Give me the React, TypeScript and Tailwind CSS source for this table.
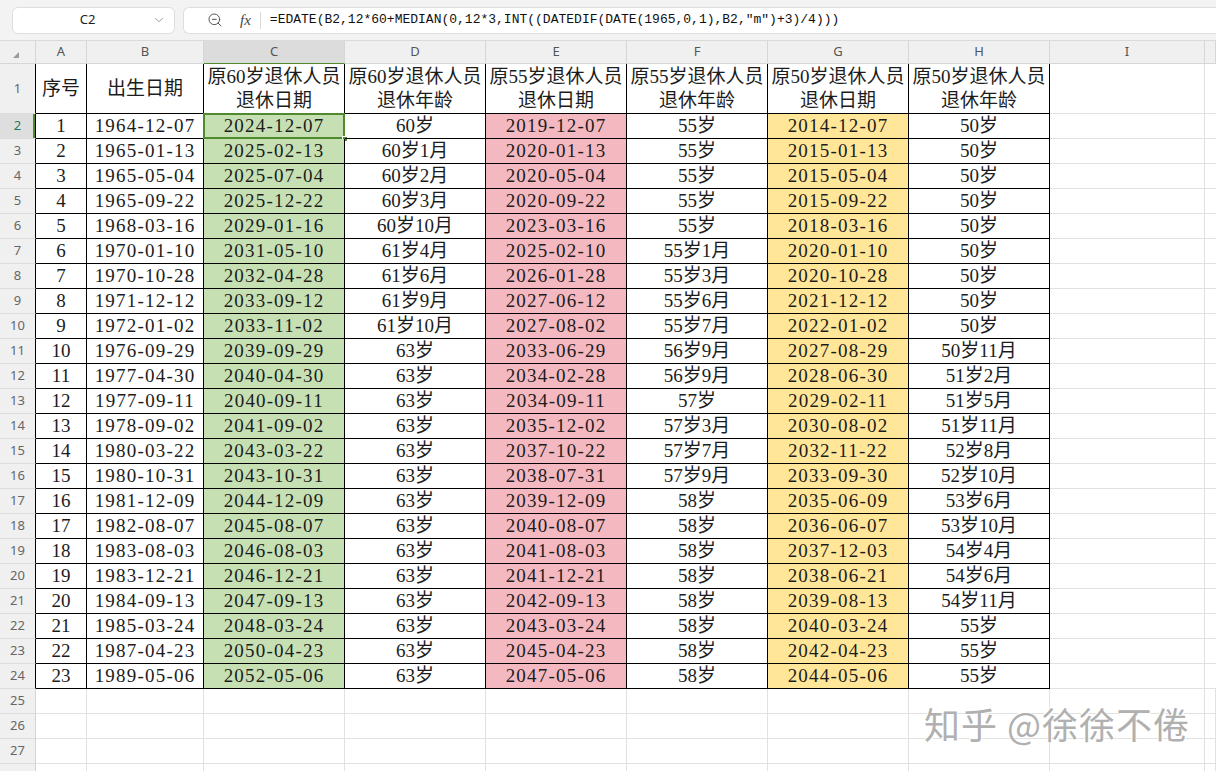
import React from "react";
import { ChevronDown, ZoomOut } from "lucide-react";

const rows: string[][] = [
  ["1", "1964-12-07", "2024-12-07", "60岁", "2019-12-07", "55岁", "2014-12-07", "50岁"],
  ["2", "1965-01-13", "2025-02-13", "60岁1月", "2020-01-13", "55岁", "2015-01-13", "50岁"],
  ["3", "1965-05-04", "2025-07-04", "60岁2月", "2020-05-04", "55岁", "2015-05-04", "50岁"],
  ["4", "1965-09-22", "2025-12-22", "60岁3月", "2020-09-22", "55岁", "2015-09-22", "50岁"],
  ["5", "1968-03-16", "2029-01-16", "60岁10月", "2023-03-16", "55岁", "2018-03-16", "50岁"],
  ["6", "1970-01-10", "2031-05-10", "61岁4月", "2025-02-10", "55岁1月", "2020-01-10", "50岁"],
  ["7", "1970-10-28", "2032-04-28", "61岁6月", "2026-01-28", "55岁3月", "2020-10-28", "50岁"],
  ["8", "1971-12-12", "2033-09-12", "61岁9月", "2027-06-12", "55岁6月", "2021-12-12", "50岁"],
  ["9", "1972-01-02", "2033-11-02", "61岁10月", "2027-08-02", "55岁7月", "2022-01-02", "50岁"],
  ["10", "1976-09-29", "2039-09-29", "63岁", "2033-06-29", "56岁9月", "2027-08-29", "50岁11月"],
  ["11", "1977-04-30", "2040-04-30", "63岁", "2034-02-28", "56岁9月", "2028-06-30", "51岁2月"],
  ["12", "1977-09-11", "2040-09-11", "63岁", "2034-09-11", "57岁", "2029-02-11", "51岁5月"],
  ["13", "1978-09-02", "2041-09-02", "63岁", "2035-12-02", "57岁3月", "2030-08-02", "51岁11月"],
  ["14", "1980-03-22", "2043-03-22", "63岁", "2037-10-22", "57岁7月", "2032-11-22", "52岁8月"],
  ["15", "1980-10-31", "2043-10-31", "63岁", "2038-07-31", "57岁9月", "2033-09-30", "52岁10月"],
  ["16", "1981-12-09", "2044-12-09", "63岁", "2039-12-09", "58岁", "2035-06-09", "53岁6月"],
  ["17", "1982-08-07", "2045-08-07", "63岁", "2040-08-07", "58岁", "2036-06-07", "53岁10月"],
  ["18", "1983-08-03", "2046-08-03", "63岁", "2041-08-03", "58岁", "2037-12-03", "54岁4月"],
  ["19", "1983-12-21", "2046-12-21", "63岁", "2041-12-21", "58岁", "2038-06-21", "54岁6月"],
  ["20", "1984-09-13", "2047-09-13", "63岁", "2042-09-13", "58岁", "2039-08-13", "54岁11月"],
  ["21", "1985-03-24", "2048-03-24", "63岁", "2043-03-24", "58岁", "2040-03-24", "55岁"],
  ["22", "1987-04-23", "2050-04-23", "63岁", "2045-04-23", "58岁", "2042-04-23", "55岁"],
  ["23", "1989-05-06", "2052-05-06", "63岁", "2047-05-06", "58岁", "2044-05-06", "55岁"],
];

const headers = [
  ["序号"],
  ["出生日期"],
  ["原60岁退休人员", "退休日期"],
  ["原60岁退休人员", "退休年龄"],
  ["原55岁退休人员", "退休日期"],
  ["原55岁退休人员", "退休年龄"],
  ["原50岁退休人员", "退休日期"],
  ["原50岁退休人员", "退休年龄"],
];

const letters = ["A", "B", "C", "D", "E", "F", "G", "H", "I", ""];

// column widths: row header, A..I, J
const widths = [
  "w-[36px]",
  "w-[51px]",
  "w-[117px]",
  "w-[141px]",
  "w-[141px]",
  "w-[141px]",
  "w-[141px]",
  "w-[141px]",
  "w-[141px]",
  "w-[155px]",
  "flex-1",
];

const fill = ["", "", "bg-[#c6e0b4]", "", "bg-[#f4b8c0]", "", "bg-[#ffe699]", ""];

const cellFont = {
  fontFamily: '"Liberation Serif", "Noto Sans CJK SC", serif',
};
const uiFont = {
  fontFamily: '"Noto Sans", "Noto Sans CJK SC", sans-serif',
};

function RowHeader({ n, inTable, selected }: { n?: number; inTable: boolean; selected?: boolean }) {
  return (
    <div
      style={uiFont}
      className={`${widths[0]} shrink-0 flex items-center justify-center text-[13px] border-b border-[#dcdcdc] border-r ${
        inTable ? "border-r-black" : "border-r-[#d4d4d4]"
      } ${selected ? "bg-[#dedede] text-[#1e7b5e] shadow-[inset_-2px_0_0_#4f8a2f]" : "bg-[#f0f0f0] text-[#666]"}`}
    >
      {n}
    </div>
  );
}

function EmptyCells() {
  return (
    <>
      {widths.slice(1).map((w, i) => (
        <div key={i} className={`${w} shrink-0 border-r border-b border-[#e1e1e1] bg-white`} />
      ))}
    </>
  );
}

export default function App() {
  return (
    <div className="relative w-[1216px] h-[771px] overflow-hidden bg-white" style={uiFont}>
      {/* toolbar */}
      <div className="h-[41px] bg-[#f3f3f3] flex items-center gap-2 pl-3 border-b border-[#dadada]">
        <div className="w-[163px] h-[27px] bg-white rounded-md border border-[#dedede] flex items-center relative">
          <span className="flex-1 text-center text-[13px] text-[#222] pr-3">C2</span>
          <ChevronDown className="absolute right-2 w-3.5 h-3.5 text-[#888]" strokeWidth={1.5} />
        </div>
        <div className="flex-1 h-[27px] bg-white rounded-l-md border border-r-0 border-[#dedede] flex items-center">
          <ZoomOut className="ml-[23px] w-4 h-4 text-[#555]" strokeWidth={1.5} />
          <span
            className="ml-[17px] text-[15px] italic text-[#444]"
            style={{ fontFamily: '"Liberation Serif", serif' }}
          >
            fx
          </span>
          <div className="ml-[9px] w-px h-[17px] bg-[#d8d8d8]" />
          <span
            className="ml-[9px] text-[13px] text-[#111] whitespace-nowrap"
            style={{ fontFamily: '"Liberation Mono", monospace' }}
          >
            =EDATE(B2,12*60+MEDIAN(0,12*3,INT((DATEDIF(DATE(1965,0,1),B2,"m")+3)/4)))
          </span>
        </div>
      </div>

      {/* column headers */}
      <div className="flex h-[23px]">
        <div className={`${widths[0]} shrink-0 bg-[#f0f0f0] border-r border-b border-[#d6d6d6] flex items-end justify-center pb-[5px]`}>
          <div className="w-0 h-0 border-l-[6px] border-l-transparent border-b-[6px] border-b-[#9a9a9a] ml-[-4px]" />
        </div>
        {letters.map((l, i) => (
          <div
            key={i}
            className={`${widths[i + 1]} shrink-0 flex items-center justify-center text-[13px] text-[#555] border-r border-b border-[#d6d6d6] ${
              l === "C" ? "bg-[#dcdcdc] border-b-[#4f8a2f]" : "bg-[#f0f0f0]"
            }`}
          >
            {l}
          </div>
        ))}
      </div>

      {/* row 1: table header */}
      <div className="flex h-[50px]" style={cellFont}>
        <RowHeader n={1} inTable />
        {headers.map((h, i) => (
          <div
            key={i}
            className={`${widths[i + 1]} shrink-0 flex flex-col items-center justify-center text-[19px] leading-[24px] text-[#1c1c1c] border-r border-b border-black bg-white`}
          >
            {h.map((t, j) => (
              <span key={j} className="whitespace-nowrap">
                {t}
              </span>
            ))}
          </div>
        ))}
        <div className={`${widths[9]} shrink-0 border-r border-b border-[#e1e1e1]`} />
        <div className={`${widths[10]} shrink-0 border-b border-[#e1e1e1]`} />
      </div>

      {/* data rows */}
      {rows.map((r, ri) => (
        <div key={ri} className="flex h-[25px]" style={cellFont}>
          <RowHeader n={ri + 2} inTable selected={ri === 0} />
          {r.map((v, ci) => {
            const isDate = v.includes("-");
            const sel = ri === 0 && ci === 2;
            return (
              <div
                key={ci}
                className={`${widths[ci + 1]} ${fill[ci]} relative shrink-0 flex items-center justify-center text-[19px] text-[#1c1c1c] border-r border-b border-black ${
                  isDate ? "tracking-[1.2px]" : ""
                }`}
              >
                <span className="whitespace-nowrap">{v}</span>
                {sel && (
                  <>
                    <div className="absolute left-[-1px] top-[-1px] right-[-1px] bottom-[-1px] border-[2px] border-[#4f8a2f]" />
                    <div className="absolute right-[-4px] bottom-[-4px] w-[6px] h-[6px] bg-[#4f8a2f] border border-white" />
                  </>
                )}
              </div>
            );
          })}
          <div className={`${widths[9]} shrink-0 border-r border-b border-[#e1e1e1]`} />
          <div className={`${widths[10]} shrink-0 border-b border-[#e1e1e1]`} />
        </div>
      ))}

      {/* empty rows */}
      {[25, 26, 27].map((n) => (
        <div key={n} className="flex h-[25px]">
          <RowHeader n={n} inTable={false} />
          <EmptyCells />
        </div>
      ))}
      <div className="flex h-[25px]">
        <RowHeader inTable={false} />
        <EmptyCells />
      </div>

      {/* watermark */}
      <div
        className="absolute left-[924px] top-[696px] text-[36px] text-[#b0b0b0] whitespace-nowrap tracking-[1px]"
        style={{ fontFamily: '"Noto Sans CJK SC", sans-serif', textShadow: "1px 1px 0 #fff, -1px -1px 0 #fff" }}
      >
        知乎 @徐徐不倦
      </div>
    </div>
  );
}
